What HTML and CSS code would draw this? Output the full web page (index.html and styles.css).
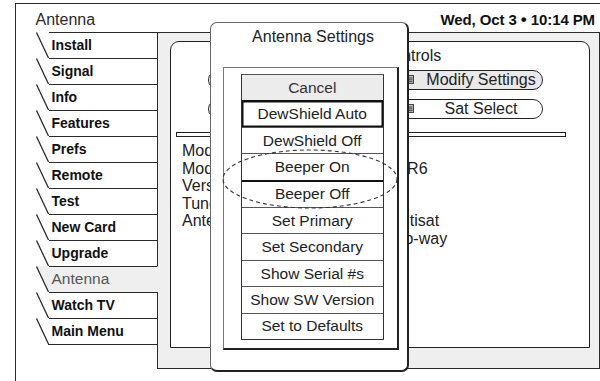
FILE: index.html
```html
<!DOCTYPE html>
<html>
<head>
  <title>Antenna Settings</title>
  <link rel="stylesheet" href="styles.css">
</head>
<body>
  <div class="screen">
    <div class="frame">
      <!-- Top bar: breadcrumb and clock -->
      <div class="topbar">
        <span class="crumb">Antenna</span>
        <span class="clock">Wed, Oct 3 <span class="dot">&bull;</span> 10:14 PM</span>
      </div>

      <div class="main">
        <!-- Menu tabs -->
        <nav class="tabs">
          <div class="tab"><svg class="slant" viewBox="0 0 13 26"><polygon points="0,0 13,0 13,26 12,26"/><line x1="0.5" y1="0.5" x2="12.5" y2="26"/></svg><span class="label">Install</span></div>
          <div class="tab"><svg class="slant" viewBox="0 0 13 26"><polygon points="0,0 13,0 13,26 12,26"/><line x1="0.5" y1="0.5" x2="12.5" y2="26"/></svg><span class="label">Signal</span></div>
          <div class="tab"><svg class="slant" viewBox="0 0 13 26"><polygon points="0,0 13,0 13,26 12,26"/><line x1="0.5" y1="0.5" x2="12.5" y2="26"/></svg><span class="label">Info</span></div>
          <div class="tab"><svg class="slant" viewBox="0 0 13 26"><polygon points="0,0 13,0 13,26 12,26"/><line x1="0.5" y1="0.5" x2="12.5" y2="26"/></svg><span class="label">Features</span></div>
          <div class="tab"><svg class="slant" viewBox="0 0 13 26"><polygon points="0,0 13,0 13,26 12,26"/><line x1="0.5" y1="0.5" x2="12.5" y2="26"/></svg><span class="label">Prefs</span></div>
          <div class="tab"><svg class="slant" viewBox="0 0 13 26"><polygon points="0,0 13,0 13,26 12,26"/><line x1="0.5" y1="0.5" x2="12.5" y2="26"/></svg><span class="label">Remote</span></div>
          <div class="tab"><svg class="slant" viewBox="0 0 13 26"><polygon points="0,0 13,0 13,26 12,26"/><line x1="0.5" y1="0.5" x2="12.5" y2="26"/></svg><span class="label">Test</span></div>
          <div class="tab"><svg class="slant" viewBox="0 0 13 26"><polygon points="0,0 13,0 13,26 12,26"/><line x1="0.5" y1="0.5" x2="12.5" y2="26"/></svg><span class="label">New Card</span></div>
          <div class="tab"><svg class="slant" viewBox="0 0 13 26"><polygon points="0,0 13,0 13,26 12,26"/><line x1="0.5" y1="0.5" x2="12.5" y2="26"/></svg><span class="label">Upgrade</span></div>
          <div class="tab active"><svg class="slant" viewBox="0 0 13 26"><polygon points="0,0 13,0 13,26 12,26"/><line x1="0.5" y1="0.5" x2="12.5" y2="26"/></svg><span class="label">Antenna</span></div>
          <div class="tab"><svg class="slant" viewBox="0 0 13 26"><polygon points="0,0 13,0 13,26 12,26"/><line x1="0.5" y1="0.5" x2="12.5" y2="26"/></svg><span class="label">Watch TV</span></div>
          <div class="tab"><svg class="slant" viewBox="0 0 13 26"><polygon points="0,0 13,0 13,26 12,26"/><line x1="0.5" y1="0.5" x2="12.5" y2="26"/></svg><span class="label">Main Menu</span></div>
          <div class="tab-rest"></div>
        </nav>

        <!-- Antenna controls panel (behind the dialog) -->
        <section class="panel">
          <div class="card">
            <div class="card-title">Antenna Controls</div>
            <div class="pills">
              <div class="pill"></div>
              <div class="pill selected"><svg class="pill-icon" viewBox="0 0 7 9"><rect x="0.5" y="0.5" width="6" height="8"/><line x1="1.5" y1="3" x2="5.5" y2="3"/><line x1="1.5" y1="4.8" x2="5.5" y2="4.8"/><line x1="1.5" y1="6.6" x2="5.5" y2="6.6"/></svg><span>Modify Settings</span></div>
              <div class="pill"></div>
              <div class="pill"><svg class="pill-icon" viewBox="0 0 7 9"><rect x="0.5" y="0.5" width="6" height="8"/><line x1="1.5" y1="3" x2="5.5" y2="3"/><line x1="1.5" y1="4.8" x2="5.5" y2="4.8"/><line x1="1.5" y1="6.6" x2="5.5" y2="6.6"/></svg><span>Sat Select</span></div>
            </div>
            <div class="rule"></div>
            <div class="info">
              <span>Model</span><span>1</span>
              <span>Mode</span><span>HDR6</span>
              <span>Version</span><span>4.0</span>
              <span>Tuner</span><span>2</span>
              <span>Antenna</span><span>Multisat</span>
              <span></span><span>Two-way</span>
            </div>
          </div>
        </section>
      </div>
    </div>

    <!-- Antenna Settings dialog -->
    <div class="dialog">
      <div class="dialog-title">Antenna Settings</div>
      <div class="dialog-box">
        <div class="options">
          <div class="option cancel">Cancel</div>
          <div class="option current">DewShield Auto</div>
          <div class="option">DewShield Off</div>
          <div class="option">Beeper On</div>
          <div class="option strong-top">Beeper Off</div>
          <div class="option">Set Primary</div>
          <div class="option">Set Secondary</div>
          <div class="option">Show Serial #s</div>
          <div class="option">Show SW Version</div>
          <div class="option">Set to Defaults</div>
        </div>
      </div>
    </div>

    <!-- dashed callout around the beeper options -->
    <svg class="callout" viewBox="0 0 176 60"><ellipse cx="88" cy="30" rx="87" ry="29"/></svg>
  </div>
</body>
</html>
```

FILE: styles.css
```css
body {
  margin: 0;
  background-color: #ffffff;
  font-family: "Liberation Sans", Arial, sans-serif;
  color: #1e1e1e;
}
.screen {
  position: relative;
  width: 600px;
  height: 381px;
  overflow: hidden;
}
.frame {
  margin: 3px 0 0 15px;
  height: 378px;
  border-top: 1.5px solid #2a2a2a;
  border-left: 1.5px solid #2a2a2a;
  box-sizing: border-box;
}

/* top bar */
.topbar {
  height: 27.5px;
  box-sizing: border-box;
  padding: 7px 5px 0 19.5px;
  display: flex;
  justify-content: space-between;
  align-items: baseline;
  line-height: 18px;
}
.crumb {
  font-size: 16px;
  color: #2a2a2a;
}
.clock {
  font-size: 15px;
  font-weight: bold;
  color: #111;
  letter-spacing: -0.1px;
}
.dot {
  font-size: 17px;
}

/* main area */
.main {
  display: flex;
  height: 337.5px;
}
.tabs {
  display: flex;
  flex-direction: column;
  width: 122px;
  margin-left: 19.5px;
}
.tab {
  display: flex;
  height: 26px;
}
.slant {
  width: 13px;
  height: 26px;
  flex: none;
  overflow: visible;
}
.slant polygon {
  fill: #ffffff;
}
.slant line {
  stroke: #2a2a2a;
  stroke-width: 1.3;
}
.label {
  flex: 1;
  border-top: 1.5px solid #2a2a2a;
  border-right: 1.5px solid #2a2a2a;
  background-color: #ffffff;
  padding-left: 3px;
  font-size: 14px;
  font-weight: bold;
  line-height: 24px;
  color: #111;
}
.tab.active .slant polygon,
.tab.active .label {
  fill: #efefef;
  background-color: #efefef;
}
.tab.active .label {
  border-right-color: transparent;
  font-weight: normal;
  font-size: 15.5px;
  color: #555;
}
.tab-rest {
  flex: 1;
  margin-left: 12.5px;
  border-top: 1.5px solid #2a2a2a;
  border-right: 1.5px solid #2a2a2a;
}

/* gray panel + card */
.panel {
  flex: 1;
  display: flex;
  box-sizing: border-box;
  padding: 8.5px 9.5px 20px 12px;
  background-color: #efefef;
  border-top: 1.5px solid #2a2a2a;
  border-right: 1.5px solid #2a2a2a;
  border-bottom: 1.5px solid #2a2a2a;
}
.card {
  flex: 1;
  background-color: #ffffff;
  border: 1.5px solid #222;
  border-radius: 9px 9px 0 0;
  padding-top: 5px;
  font-size: 16px;
  line-height: 17.5px;
}
.card-title {
  text-align: center;
  color: #222;
}
.pills {
  display: grid;
  grid-template-columns: 180px 143px;
  grid-auto-rows: 20px;
  column-gap: 12px;
  row-gap: 9px;
  margin: 5px 0 0 37.5px;
}
.pill {
  display: flex;
  align-items: center;
  justify-content: center;
  gap: 6px;
  box-sizing: border-box;
  border: 1.5px solid #222;
  border-radius: 10px;
  background-color: #ffffff;
  padding-left: 6px;
  color: #222;
}
.pill.selected {
  background-color: #e9e9e9;
}
.pill-icon {
  width: 7px;
  height: 9px;
  fill: #bbb;
  stroke: #444;
  stroke-width: 1;
  margin-right: auto;
}
.pill-icon + span {
  margin-right: auto;
}
.rule {
  width: 390px;
  height: 5px;
  box-sizing: border-box;
  margin: 13.5px 0 0 5.5px;
  border: 1.3px solid #222;
  background-color: #ffffff;
}
.info {
  display: grid;
  grid-template-columns: 202px auto;
  margin: 5px 0 0 11.5px;
  color: #222;
}

/* dialog */
.dialog {
  position: absolute;
  left: 210px;
  top: 22px;
  width: 199px;
  height: 350px;
  box-sizing: border-box;
  background-color: #ffffff;
  border-style: solid;
  border-width: 1px 2.5px 2.5px 1px;
  border-color: #666 #222 #222 #666;
  border-radius: 7px;
}
.dialog-title {
  padding: 4px 0 0 8px;
  margin-bottom: 20px;
  text-align: center;
  font-size: 16px;
  line-height: 20px;
  color: #222;
}
.dialog-box {
  height: 283px;
  box-sizing: border-box;
  margin: 0 8.5px 0 12px;
  border-style: solid;
  border-width: 1px 2px 2px 1px;
  border-color: #777 #222 #222 #777;
  padding: 6px 13px 0 17px;
}
.options {
  display: flex;
  flex-direction: column;
  height: 266px;
  box-sizing: border-box;
  border-style: solid;
  border-width: 1px 1.5px 1.5px 1.5px;
  border-color: #555 #333 #333 #333;
}
.option {
  flex: 1;
  display: flex;
  align-items: center;
  justify-content: center;
  border-top: 1px solid #555;
  font-size: 15.5px;
  color: #222;
}
.option:first-child {
  border-top: none;
}
.option.cancel {
  background-color: #ececec;
  color: #333;
}
.option.current {
  border-top: 1.5px solid #111;
  box-shadow: inset 0 0 0 1.5px #111;
}
.option.strong-top {
  border-top: 2px solid #111;
}
.callout {
  position: absolute;
  left: 222px;
  top: 149px;
  width: 176px;
  height: 60px;
  overflow: visible;
}
.callout ellipse {
  fill: none;
  stroke: #333;
  stroke-width: 1.1;
  stroke-dasharray: 4 3;
}
```
